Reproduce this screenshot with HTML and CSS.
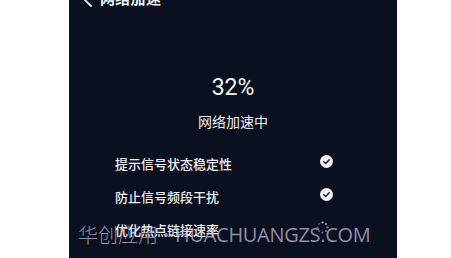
FILE: index.html
```html
<!DOCTYPE html>
<html lang="zh-CN">
<head>
<meta charset="utf-8">
<link rel="stylesheet" href="styles.css">
</head>
<body>
<div class="screen">
  <div class="header">
    <svg class="back" width="12" height="20" viewBox="0 0 12 20"><path d="M10 2 L2 10 L10 18" fill="none" stroke="#e8e8ec" stroke-width="1.8" stroke-linecap="round" stroke-linejoin="round"/></svg>
    <span class="title">网络加速</span>
  </div>
  <div class="progress">
    <div class="pct">32%</div>
    <div class="status">网络加速中</div>
  </div>
  <ul class="tasks">
    <li class="task"><span class="name">提示信号状态稳定性</span>
      <svg class="icon" width="13" height="13" viewBox="0 0 13 13"><circle cx="6.5" cy="6.5" r="6.5" fill="#f2f2f4"/><path d="M3.8 6.7 L5.7 8.5 L9.2 4.8" fill="none" stroke="#1a1d2a" stroke-width="1.5" stroke-linecap="round" stroke-linejoin="round"/></svg>
    </li>
    <li class="task"><span class="name">防止信号频段干扰</span>
      <svg class="icon" width="13" height="13" viewBox="0 0 13 13"><circle cx="6.5" cy="6.5" r="6.5" fill="#f2f2f4"/><path d="M3.8 6.7 L5.7 8.5 L9.2 4.8" fill="none" stroke="#1a1d2a" stroke-width="1.5" stroke-linecap="round" stroke-linejoin="round"/></svg>
    </li>
    <li class="task"><span class="name">优化热点链接速率</span>
      <svg class="icon spin" width="13" height="13" viewBox="0 0 13 13">
        <g fill="#c8c8d0">
          <circle cx="6.5" cy="1.5" r="1.1" opacity="0.9"/>
          <circle cx="10" cy="3" r="1.1" opacity="0.8"/>
          <circle cx="11.5" cy="6.5" r="1.1" opacity="0.7"/>
          <circle cx="10" cy="10" r="1.1" opacity="0.6"/>
          <circle cx="6.5" cy="11.5" r="1.1" opacity="0.5"/>
          <circle cx="3" cy="10" r="1.1" opacity="0.45"/>
          <circle cx="1.5" cy="6.5" r="1.1" opacity="0.4"/>
          <circle cx="3" cy="3" r="1.1" opacity="0.35"/>
        </g>
      </svg>
    </li>
  </ul>
  <div class="watermark"><span class="wm-cn">华创应用</span><span class="wm-dot">•</span><span class="wm-en">HUACHUANGZS.COM</span></div>
</div>
</body>
</html>
```
FILE: styles.css
```css
html, body {
  margin: 0;
  padding: 0;
  background: #ffffff;
}
body {
  width: 451px;
  height: 258px;
  overflow: hidden;
  font-family: "Noto Sans CJK SC", "Noto Sans", sans-serif;
}
.screen {
  position: relative;
  margin-left: 69px;
  width: 328px;
  height: 258px;
  background: #0b1020;
  overflow: hidden;
  color: #f0f0f2;
}
.header {
  display: flex;
  align-items: center;
  gap: 7px;
  height: 22px;
  margin-top: -13px;
  padding-left: 12px;
}
.back {
  display: block;
}
.title {
  font-size: 15px;
  font-weight: 600;
  line-height: 22px;
  letter-spacing: 0.3px;
}
.progress {
  display: flex;
  flex-direction: column;
  align-items: center;
  margin-top: 65px;
}
.pct {
  font-family: Roboto, "Noto Sans", sans-serif;
  font-size: 23px;
  line-height: 27px;
  color: #f4f4f6;
}
.status {
  margin-top: 10px;
  font-size: 14px;
  line-height: 20px;
  color: #ececef;
}
.tasks {
  list-style: none;
  margin: 23px 0 0 0;
  padding: 0 64px 0 46px;
  display: flex;
  flex-direction: column;
  gap: 13px;
}
.task {
  display: flex;
  align-items: center;
  justify-content: space-between;
  height: 20px;
}
.name {
  font-size: 13px;
  font-weight: 500;
  line-height: 20px;
  color: #ededf0;
}
.icon {
  display: block;
  margin-top: -5px;
}
.spin {
  margin-right: 4px;
}
.watermark {
  position: absolute;
  left: 9px;
  top: 222px;
  display: flex;
  align-items: center;
  color: rgba(200, 192, 222, 0.72);
  white-space: nowrap;
}
.wm-cn {
  font-size: 20px;
  font-weight: 300;
  line-height: 26px;
}
.wm-dot {
  font-family: "Open Sans", sans-serif;
  font-size: 16px;
  margin: 0 6px 0 5px;
}
.wm-en {
  font-family: "Open Sans", sans-serif;
  font-size: 20px;
  font-weight: 400;
  line-height: 26px;
  letter-spacing: -0.3px;
}
```
